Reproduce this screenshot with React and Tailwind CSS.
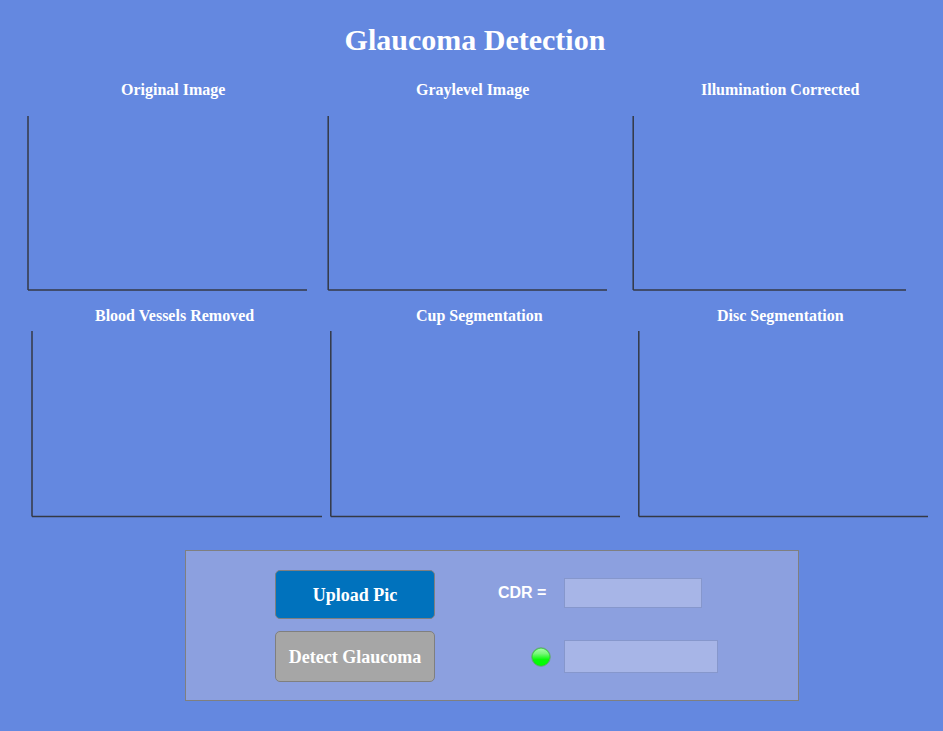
function Axes({ width, height, x, y }) {
  return (
    <svg width={width} height={height} className="block shrink-0" fill="none" stroke="#343945" strokeWidth="1.5">
      <path d={`M${x} 0V${y}M${x} ${y}H${width}`} />
    </svg>
  );
}

function Label({ children, className }) {
  return <h2 className={`whitespace-nowrap text-[16px] leading-5 font-bold ${className}`}>{children}</h2>;
}

export default function App() {
  return (
    <main className="h-[731px] w-[943px] overflow-hidden bg-[#6488e0] font-['Liberation_Serif',serif] text-white">
      <h1 className="ml-[7px] pt-[22px] text-center text-[30px] leading-9 font-bold">Glaucoma Detection</h1>

      <section className="mt-[22px] grid grid-cols-[300px_305px_1fr] pl-[27px]">
        <div>
          <Label className="pl-[94px]">Original Image</Label>
          <div className="mt-4"><Axes width={280} height={175} x={1} y={173.9} /></div>
        </div>
        <div>
          <Label className="pl-[89px]">Graylevel Image</Label>
          <div className="mt-4"><Axes width={280} height={175} x={1.2} y={173.9} /></div>
        </div>
        <div>
          <Label className="pl-[69px]">Illumination Corrected</Label>
          <div className="mt-4"><Axes width={274} height={175} x={1.2} y={173.9} /></div>
        </div>
      </section>

      <section className="mt-[15px] grid grid-cols-[299px_308px_1fr] pl-[31px]">
        <div>
          <Label className="pl-16">Blood Vessels Removed</Label>
          <div className="mt-[5px]"><Axes width={291} height={187} x={1} y={185.4} /></div>
        </div>
        <div>
          <Label className="pl-[86px]">Cup Segmentation</Label>
          <div className="mt-[5px]"><Axes width={290} height={187} x={0.8} y={185.4} /></div>
        </div>
        <div>
          <Label className="pl-[79px]">Disc Segmentation</Label>
          <div className="mt-[5px]"><Axes width={290} height={187} x={0.8} y={185.4} /></div>
        </div>
      </section>

      <section className="mt-8 ml-[185px] flex h-[151px] w-[614px] border border-[#7f7f7f] bg-[#8ca0df] pt-[19px] pl-[89px]">
        <div className="flex w-40 flex-col gap-3">
          <button className="h-[49px] rounded-[5px] border border-[#7f7f7f] bg-[#0072bd] pt-0.5 text-[18px] font-bold">Upload Pic</button>
          <button className="h-[51px] rounded-[5px] border border-[#7f7f7f] bg-[#a6a6a6] pt-0.5 text-[18px] font-bold whitespace-nowrap">Detect Glaucoma</button>
        </div>
        <div className="ml-[63px] pt-2">
          <div className="flex h-[30px] items-center">
            <label htmlFor="cdr" className="w-[66px] pb-px font-['Liberation_Sans',sans-serif] text-[16px] font-bold whitespace-nowrap">CDR =</label>
            <input id="cdr" readOnly className="h-[30px] w-[138px] border border-[#8697cc] bg-[#a7b5e7]" />
          </div>
          <div className="mt-8 flex h-[33px] items-center">
            <span className="flex w-[66px] pl-[33px]">
              <svg width="20" height="20" viewBox="0 0 20 20">
                <defs>
                  <linearGradient id="lamp" x1="0" y1="0" x2="0" y2="1">
                    <stop offset="0" stopColor="#a8fca8" />
                    <stop offset=".3" stopColor="#78f878" />
                    <stop offset=".65" stopColor="#08fb08" />
                    <stop offset="1" stopColor="#00ff00" />
                  </linearGradient>
                </defs>
                <circle cx="10" cy="10" r="9.3" fill="#14df1c" stroke="#6fa183" />
                <ellipse cx="10" cy="10" rx="8.5" ry="8.6" fill="url(#lamp)" />
              </svg>
            </span>
            <input aria-label="Result" readOnly className="h-[33px] w-[154px] border border-[#8697cc] bg-[#a7b5e7]" />
          </div>
        </div>
      </section>
    </main>
  );
}
